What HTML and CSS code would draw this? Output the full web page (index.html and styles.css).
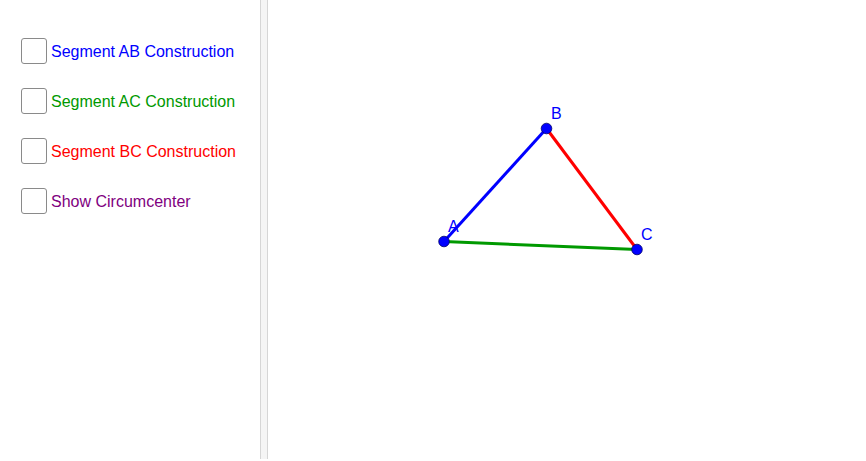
FILE: index.html
```html
<!DOCTYPE html>
<html>
<head>
<meta charset="utf-8">
<link rel="stylesheet" href="styles.css">
</head>
<body>
<div class="app">
  <div class="panel">
    <label class="row"><span class="box"></span><span class="lbl blue">Segment AB Construction</span></label>
    <label class="row"><span class="box"></span><span class="lbl green">Segment AC Construction</span></label>
    <label class="row"><span class="box"></span><span class="lbl red">Segment BC Construction</span></label>
    <label class="row"><span class="box"></span><span class="lbl purple">Show Circumcenter</span></label>
  </div>
  <div class="divider"></div>
  <div class="canvas">
    <svg class="graph" width="598" height="461" viewBox="268 0 598 461">
      <line x1="444" y1="241.5" x2="546.5" y2="128.5" stroke="#0000ff" stroke-width="3"/>
      <line x1="546.5" y1="128.5" x2="637" y2="249.5" stroke="#ff0000" stroke-width="3"/>
      <line x1="444" y1="241.5" x2="637" y2="249.5" stroke="#009900" stroke-width="3"/>
      <circle cx="444" cy="241.5" r="5.3" fill="#0000ff" stroke="#000066" stroke-width="0.8"/>
      <circle cx="546.5" cy="128.5" r="5.3" fill="#0000ff" stroke="#000066" stroke-width="0.8"/>
      <circle cx="637" cy="249.5" r="5.3" fill="#0000ff" stroke="#000066" stroke-width="0.8"/>
      <text x="448" y="232" class="pt">A</text>
      <text x="551" y="119" class="pt">B</text>
      <text x="641" y="240" class="pt">C</text>
    </svg>
  </div>
</div>
</body>
</html>
```
FILE: styles.css
```css
html, body {
  margin: 0;
  padding: 0;
  background: #ffffff;
  font-family: "Liberation Sans", Arial, sans-serif;
}
.app {
  display: flex;
  width: 866px;
  height: 461px;
  overflow: hidden;
}
.panel {
  width: 260px;
  flex: none;
  box-sizing: border-box;
  padding: 38px 0 0 21px;
  display: flex;
  flex-direction: column;
  gap: 24px;
}
.row {
  display: flex;
  align-items: center;
  gap: 4px;
  height: 26px;
}
.box {
  width: 26px;
  height: 26px;
  box-sizing: border-box;
  border: 1.5px solid #8a8a8a;
  border-radius: 3px;
  background: #fff;
  flex: none;
}
.lbl {
  font-size: 16px;
  line-height: 20px;
  padding-top: 2px;
}
.blue { color: #0000ff; }
.green { color: #009900; }
.red { color: #ff0000; }
.purple { color: #800080; }
.divider {
  width: 8px;
  flex: none;
  height: 459px;
  box-sizing: border-box;
  background: #f5f5f5;
  border-left: 1px solid #d6d6d6;
  border-right: 1px solid #d6d6d6;
}
.canvas {
  flex: 1;
  position: relative;
}
.graph {
  display: block;
}
.pt {
  font-family: "Liberation Sans", Arial, sans-serif;
  font-size: 16px;
  fill: #0000ff;
}
```
